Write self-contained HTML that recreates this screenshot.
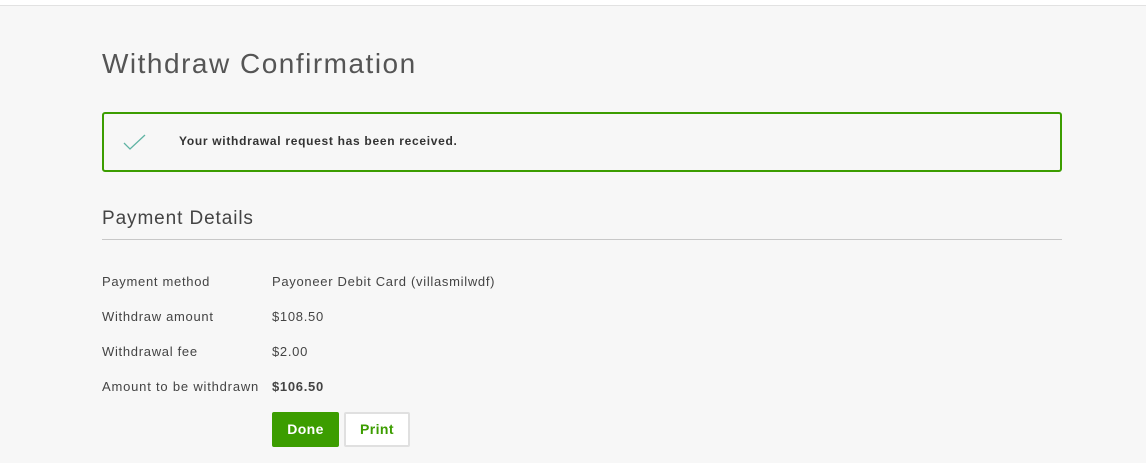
<!DOCTYPE html>
<html><head><style>
body{margin:0;width:1146px;height:463px;background:#f7f7f7;font-family:"Liberation Sans",sans-serif;color:#4a4a4a;overflow:hidden;position:relative}
.top{position:absolute;left:0;top:0;width:1146px;height:5px;background:#fff;border-bottom:1px solid #e2e2e2}
.h1{position:absolute;left:102px;top:48px;font-size:28px;color:#555;letter-spacing:1.5px}
.alert{position:absolute;left:102px;top:112px;width:956px;height:56px;border:2px solid #3c9d00;border-radius:3px}
.alert span{position:absolute;left:75px;top:20px;font-size:12px;font-weight:bold;color:#333;letter-spacing:0.7px}
.h2{position:absolute;left:102px;top:208px;font-size:19px;color:#444;letter-spacing:0.9px}
.line{position:absolute;left:102px;top:239px;width:960px;height:1px;background:#c8c8c8}
.r{position:absolute;font-size:13px;color:#444;letter-spacing:0.7px}
.btn{position:absolute;top:412px;height:35px;box-sizing:border-box;border-radius:2px;font-size:14px;font-weight:bold;text-align:center;line-height:33px;letter-spacing:0.4px}
</style></head><body>
<div class="top"></div>
<div class="h1">Withdraw Confirmation</div>
<div class="alert">
<svg style="position:absolute;left:19px;top:20px" width="24" height="16" viewBox="0 0 24 16"><path d="M1 9 L7 15 L22 1" fill="none" stroke="#5fb3a3" stroke-width="1.3"/></svg>
<span>Your withdrawal request has been received.</span></div>
<div class="h2">Payment Details</div>
<div class="line"></div>
<div class="r" style="left:102px;top:274px">Payment method</div><div class="r" style="left:272px;top:274px">Payoneer Debit Card (villasmilwdf)</div>
<div class="r" style="left:102px;top:309px">Withdraw amount</div><div class="r" style="left:272px;top:309px">$108.50</div>
<div class="r" style="left:102px;top:344px">Withdrawal fee</div><div class="r" style="left:272px;top:344px">$2.00</div>
<div class="r" style="left:102px;top:379px;letter-spacing:0.8px">Amount to be withdrawn</div><div class="r" style="left:272px;top:379px;font-weight:bold">$106.50</div>
<div class="btn" style="left:272px;width:67px;background:#3c9d00;color:#fff;border:1px solid #3c9d00">Done</div>
<div class="btn" style="left:344px;width:66px;background:#fff;color:#3c9d00;border:2px solid #e0e0e0;line-height:31px">Print</div>
</body></html>
